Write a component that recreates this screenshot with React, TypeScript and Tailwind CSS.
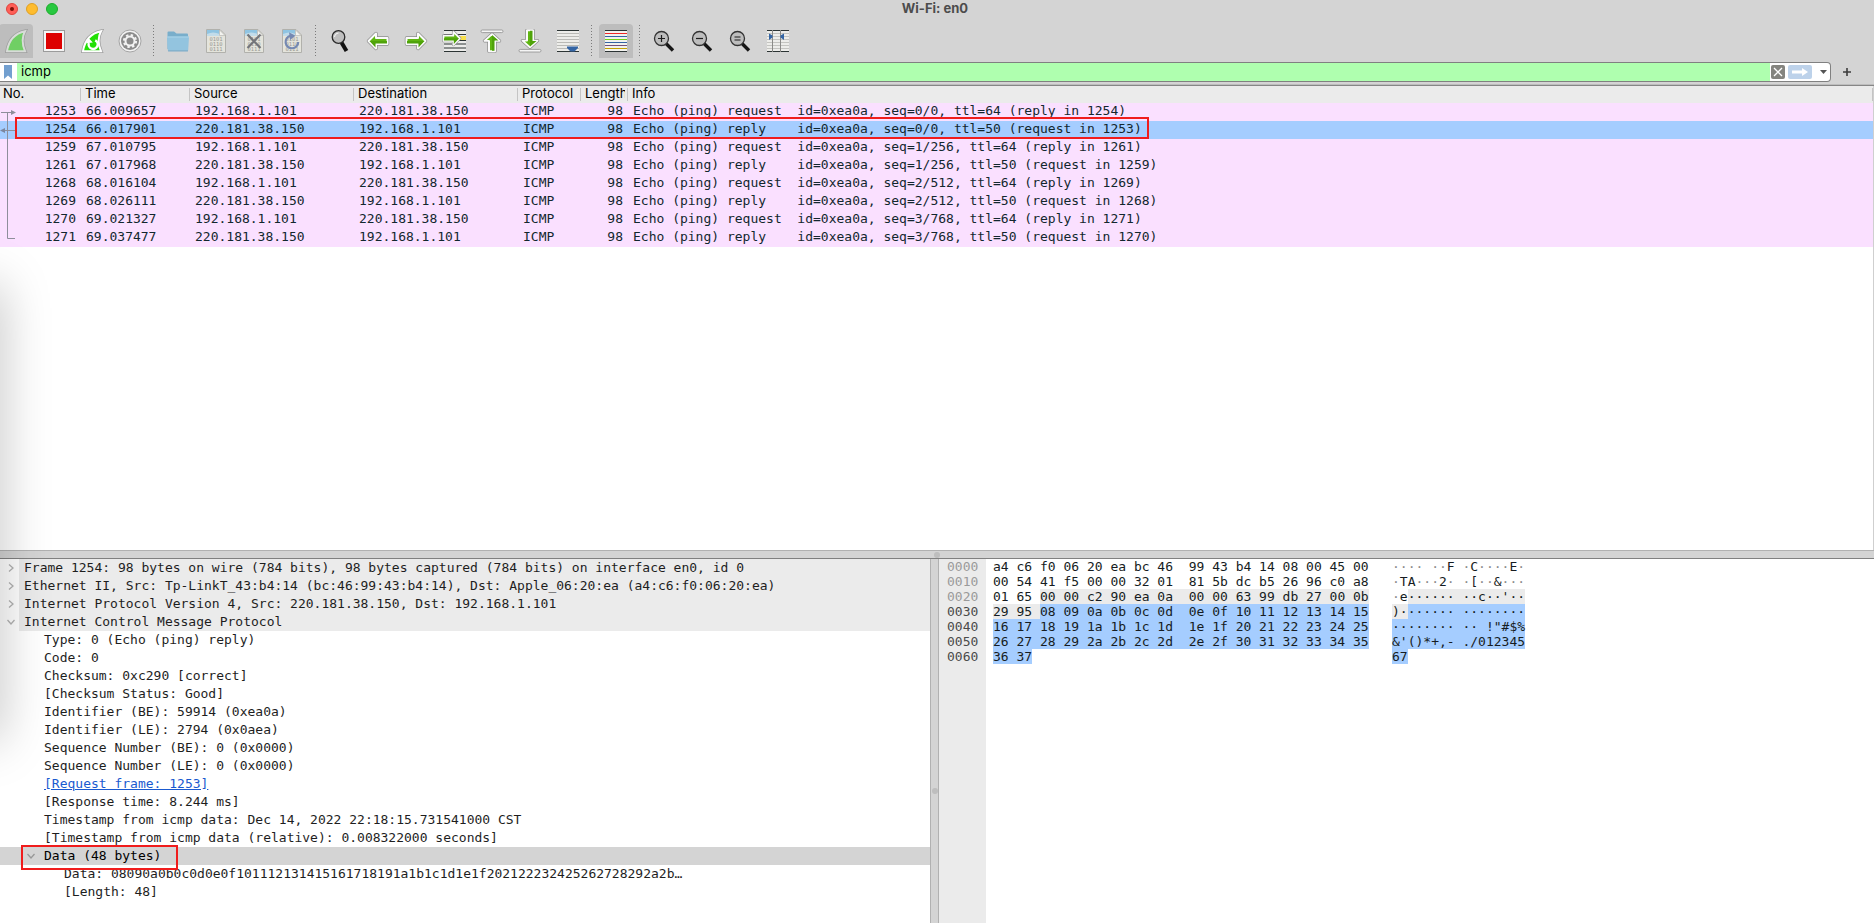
import type { ReactNode } from "react";

type Packet = {
  no: number;
  time: string;
  src: string;
  dst: string;
  info: string;
};

const LOCAL = "192.168.1.101";
const REMOTE = "220.181.38.150";

const packets: Packet[] = [
  { no: 1253, time: "66.009657", src: LOCAL, dst: REMOTE, info: "Echo (ping) request  id=0xea0a, seq=0/0, ttl=64 (reply in 1254)" },
  { no: 1254, time: "66.017901", src: REMOTE, dst: LOCAL, info: "Echo (ping) reply    id=0xea0a, seq=0/0, ttl=50 (request in 1253)" },
  { no: 1259, time: "67.010795", src: LOCAL, dst: REMOTE, info: "Echo (ping) request  id=0xea0a, seq=1/256, ttl=64 (reply in 1261)" },
  { no: 1261, time: "67.017968", src: REMOTE, dst: LOCAL, info: "Echo (ping) reply    id=0xea0a, seq=1/256, ttl=50 (request in 1259)" },
  { no: 1268, time: "68.016104", src: LOCAL, dst: REMOTE, info: "Echo (ping) request  id=0xea0a, seq=2/512, ttl=64 (reply in 1269)" },
  { no: 1269, time: "68.026111", src: REMOTE, dst: LOCAL, info: "Echo (ping) reply    id=0xea0a, seq=2/512, ttl=50 (request in 1268)" },
  { no: 1270, time: "69.021327", src: LOCAL, dst: REMOTE, info: "Echo (ping) request  id=0xea0a, seq=3/768, ttl=64 (reply in 1271)" },
  { no: 1271, time: "69.037477", src: REMOTE, dst: LOCAL, info: "Echo (ping) reply    id=0xea0a, seq=3/768, ttl=50 (request in 1270)" },
];

const layers = [
  { text: "Frame 1254: 98 bytes on wire (784 bits), 98 bytes captured (784 bits) on interface en0, id 0", open: false },
  { text: "Ethernet II, Src: Tp-LinkT_43:b4:14 (bc:46:99:43:b4:14), Dst: Apple_06:20:ea (a4:c6:f0:06:20:ea)", open: false },
  { text: "Internet Protocol Version 4, Src: 220.181.38.150, Dst: 192.168.1.101", open: false },
  { text: "Internet Control Message Protocol", open: true },
];

const icmpFields = [
  "Type: 0 (Echo (ping) reply)",
  "Code: 0",
  "Checksum: 0xc290 [correct]",
  "[Checksum Status: Good]",
  "Identifier (BE): 59914 (0xea0a)",
  "Identifier (LE): 2794 (0x0aea)",
  "Sequence Number (BE): 0 (0x0000)",
  "Sequence Number (LE): 0 (0x0000)",
  "[Request frame: 1253]",
  "[Response time: 8.244 ms]",
  "Timestamp from icmp data: Dec 14, 2022 22:18:15.731541000 CST",
  "[Timestamp from icmp data (relative): 0.008322000 seconds]",
];

type Tone = "plain" | "field" | "selected";
type Segment = [string, Tone];

const toneClass: Record<Tone, string> = {
  plain: "",
  field: "bg-[#ebebeb]",
  selected: "bg-[#a5cdff]",
};

const hexRows: { offset: string; hex: Segment[]; ascii: Segment[] }[] = [
  {
    offset: "0000",
    hex: [["a4 c6 f0 06 20 ea bc 46  99 43 b4 14 08 00 45 00", "plain"]],
    ascii: [["···· ··F ·C····E·", "plain"]],
  },
  {
    offset: "0010",
    hex: [["00 54 41 f5 00 00 32 01  81 5b dc b5 26 96 c0 a8", "plain"]],
    ascii: [["·TA···2· ·[··&···", "plain"]],
  },
  {
    offset: "0020",
    hex: [["01 65 ", "plain"], ["00 00 c2 90 ea 0a  00 00 63 99 db 27 00 0b", "field"]],
    ascii: [["·e", "plain"], ["······ ··c··'··", "field"]],
  },
  {
    offset: "0030",
    hex: [["29 95 ", "field"], ["08 09 0a 0b 0c 0d  0e 0f 10 11 12 13 14 15", "selected"]],
    ascii: [[")·", "field"], ["······ ········", "selected"]],
  },
  {
    offset: "0040",
    hex: [["16 17 18 19 1a 1b 1c 1d  1e 1f 20 21 22 23 24 25", "selected"]],
    ascii: [["········ ·· !\"#$%", "selected"]],
  },
  {
    offset: "0050",
    hex: [["26 27 28 29 2a 2b 2c 2d  2e 2f 30 31 32 33 34 35", "selected"]],
    ascii: [["&'()*+,- ./012345", "selected"]],
  },
  {
    offset: "0060",
    hex: [["36 37", "selected"]],
    ascii: [["67", "selected"]],
  },
];

const MONO = "font-['DejaVu_Sans_Mono',monospace] text-[13px]";

/* ---------- toolbar icons, all on a 24px grid ---------- */

const Icon = ({ children }: { children: ReactNode }) => (
  <svg width="24" height="24" viewBox="0 0 24 24" fill="none" aria-hidden="true">
    {children}
  </svg>
);

const FIN = "M3 22.2C4.5 12.5 10 4.5 21 2.2C17.8 8 18 15 21 22.2Z";

const Fin = ({ color, edge }: { color: string; edge: string }) => (
  <>
    <path d={FIN} stroke="#9d9d9d" strokeWidth="3.4" />
    <path d={FIN} fill={color} stroke={edge} strokeWidth="2" />
  </>
);

const StartIcon = () => (
  <Icon>
    <Fin color="#70cf64" edge="#d8dcd8" />
  </Icon>
);

const StopIcon = () => (
  <Icon>
    <rect x="1.5" y="1.5" width="21" height="21" fill="#f4f4f4" stroke="#9b9b9b" />
    <rect x="4" y="4" width="16" height="16" fill="#dd0000" />
  </Icon>
);

const RestartIcon = () => (
  <Icon>
    <Fin color="#22e005" edge="#ffffff" />
    <path d="M8.9 14A4.5 4.5 0 1 0 15.2 11.4" stroke="#fff" strokeWidth="2.4" />
    <path d="M6.4 14.2L8.2 8.6L12.8 13.4Z" fill="#fff" />
  </Icon>
);

const OptionsIcon = () => (
  <Icon>
    <circle cx="12" cy="12" r="11" fill="#f2f2f2" stroke="#a5a5a5" />
    <circle cx="12" cy="12" r="9" fill="#8b8b8b" />
    <circle cx="12" cy="12" r="6" stroke="#f2f2f2" strokeWidth="2.2" strokeDasharray="2.4 2.31" />
    <circle cx="12" cy="12" r="4.5" stroke="#f2f2f2" strokeWidth="2" />
  </Icon>
);

const FolderIcon = () => (
  <Icon>
    <path d="M1.5 3.5Q1.5 2.5 2.5 2.5H8L10.5 4.5H21Q22 4.5 22 5.5V20H1.5Z" fill="#79aecb" />
    <path d="M1 7.5H23L22.2 21.2Q22.1 22.2 21 22.2H3Q1.9 22.2 1.8 21.2Z" fill="#93c4df" />
    <path d="M1 8H23" stroke="#abd4e9" />
    <path d="M2 21.9H22" stroke="#7da9c2" />
  </Icon>
);

const Sheet = ({ children }: { children?: ReactNode }) => (
  <Icon>
    <path d="M2.5 0.5H16L21.5 6V23.5H2.5Z" fill="#e4e4dc" stroke="#b1b1ac" />
    <path d="M3 1H15.5V6H3Z" fill="#8fc4e2" />
    <path d="M3 5Q9 2 15.5 5V7H3Z" fill="#c2dcea" />
    <path d="M15.5 1V6.5H21Z" fill="#f4f4f0" stroke="#b9b9b4" strokeWidth="0.7" />
    <g fill="#9b9b96" fontFamily="DejaVu Sans Mono, monospace" fontSize="5.5">
      <text x="5.4" y="12">0101</text>
      <text x="5.4" y="17">0110</text>
      <text x="5.4" y="22">0111</text>
    </g>
    {children}
  </Icon>
);

const CloseFileIcon = () => (
  <Sheet>
    <path d="M5.5 5.5L18.5 19M18.5 5.5L5.5 19" stroke="#74757a" strokeWidth="2.2" />
  </Sheet>
);

const ReloadFileIcon = () => (
  <Sheet>
    <path d="M10.5 6.8A6.3 6.3 0 1 0 18.2 13" stroke="#7589b2" strokeWidth="2.2" />
    <path d="M9 3.2L15.5 6.8L10 11Z" fill="#7589b2" />
  </Sheet>
);

const FindIcon = () => (
  <Icon>
    <path d="M13.5 13.5L18.5 22" stroke="#111" strokeWidth="4" />
    <circle cx="10.5" cy="8" r="6.3" fill="#bfbfbf" stroke="#2b2b2b" strokeWidth="1.3" />
    <path d="M6.5 8Q7 4.5 10.5 4" stroke="#f1f1f1" strokeWidth="1.2" />
  </Icon>
);

const GREEN_ARROW = "M2.5 12L10 4.5V9H21.5V15H10V19.5Z";

const GreenArrow = ({ transform }: { transform?: string }) => (
  <g transform={transform} strokeLinejoin="round">
    <path d={GREEN_ARROW} stroke="#8d8d8d" strokeWidth="3.4" />
    <path d={GREEN_ARROW} stroke="#fbfbfb" strokeWidth="2" fill="#5fb512" />
    <path d="M10 12H21V14.5H9.5V18.5L3.5 12Z" fill="#4fa30a" />
  </g>
);

const PrevIcon = () => (
  <Icon>
    <GreenArrow />
  </Icon>
);

const NextIcon = () => (
  <Icon>
    <GreenArrow transform="matrix(-1 0 0 1 24 0)" />
  </Icon>
);

const GotoIcon = () => (
  <Icon>
    <rect x="2" y="1" width="22" height="22" fill="#ececea" />
    <path d="M2 1.5H24M2 11.5H24M2 15H24M2 19H24M2 22.5H24" stroke="#2c3434" />
    <path d="M2 5.5H24" stroke="#2c3434" />
    <rect x="17" y="7" width="7" height="4" fill="#f8e04a" />
    <GreenArrow transform="matrix(-0.86 0 0 0.86 20 -1)" />
  </Icon>
);

const FirstIcon = () => (
  <Icon>
    <rect x="1" y="1" width="22" height="2.6" rx="1.3" fill="#f5f5f5" stroke="#8d8d8d" strokeWidth="0.8" />
    <GreenArrow transform="matrix(0 0.9 1 0 0 2.9)" />
  </Icon>
);

const LastIcon = () => (
  <Icon>
    <rect x="1" y="20.4" width="22" height="2.6" rx="1.3" fill="#f5f5f5" stroke="#8d8d8d" strokeWidth="0.8" />
    <GreenArrow transform="matrix(0 -0.9 1 0 0 20.6)" />
  </Icon>
);

const AutoScrollIcon = () => (
  <Icon>
    <rect x="1" y="1" width="22" height="22" fill="#ededea" />
    <path d="M1 4.5H23M1 7.5H23M1 10.5H23M1 13.5H23M1 16.5H23M1 19.5H23" stroke="#babab6" />
    <path d="M1 1.5H23M1 22.5H23" stroke="#2c3434" />
    <path d="M11 17.5H22V19L18.5 22.5H14.5L11 19Z" fill="#3465a4" />
  </Icon>
);

const ColorizeIcon = () => (
  <Icon>
    <rect x="1" y="1" width="22" height="22" fill="#f2f2ef" />
    <path d="M1 1.5H23M1 22.5H23" stroke="#2c3434" />
    <path d="M1 4.5H23" stroke="#ef2929" />
    <path d="M1 7.5H23" stroke="#3465a4" />
    <path d="M1 10.5H23" stroke="#73d216" />
    <path d="M1 13.5H23" stroke="#3465a4" />
    <path d="M1 16.5H23" stroke="#75507b" />
    <path d="M1 19.5H23" stroke="#c4a000" />
  </Icon>
);

const ZoomIcon = ({ mark }: { mark: string }) => (
  <Icon>
    <path d="M14 14.5L21 21.5" stroke="#161616" strokeWidth="3.4" />
    <circle cx="9.5" cy="9.5" r="7" fill="#bdbdbd" stroke="#333" strokeWidth="1.3" />
    <path d={mark} stroke="#1d1d1d" strokeWidth="1.2" />
  </Icon>
);

const ResizeIcon = () => (
  <Icon>
    <rect x="1" y="1" width="22" height="22" fill="#ededea" />
    <path d="M1 4.5H23M1 7.5H23M1 10.5H23M1 13.5H23M1 16.5H23M1 19.5H23" stroke="#c4c4c0" />
    <path d="M1 1.5H23M1 22.5H23" stroke="#2c3434" />
    <path d="M6.5 1V23M14.5 1V23" stroke="#8b8b88" />
    <path d="M3 4.5L6.5 6.5V8.5L3 11Z" fill="#3465a4" />
    <path d="M18 4.5L14.5 6.5V8.5L18 11Z" fill="#3465a4" />
  </Icon>
);

const ToolButton = ({ label, active, children }: { label: string; active?: boolean; children: ReactNode }) => (
  <button
    type="button"
    aria-label={label}
    className={`flex h-[34px] w-[34px] items-center justify-center ${active ? "rounded-t-sm bg-[#bdbdbd]" : ""}`}
  >
    {children}
  </button>
);

const Divider = () => (
  <svg width="6" height="32" viewBox="0 0 6 32" aria-hidden="true">
    <path d="M2.5 0V32" stroke="#7b7b7b" strokeDasharray="1 2" />
  </svg>
);

const Toolbar = () => (
  <div className="-ml-px flex h-[42px] items-center gap-1">
    <ToolButton label="Start capturing packets" active><StartIcon /></ToolButton>
    <ToolButton label="Stop capturing packets"><StopIcon /></ToolButton>
    <ToolButton label="Restart current capture"><RestartIcon /></ToolButton>
    <ToolButton label="Capture options"><OptionsIcon /></ToolButton>
    <Divider />
    <ToolButton label="Open a capture file"><FolderIcon /></ToolButton>
    <ToolButton label="Save this capture file"><Sheet /></ToolButton>
    <ToolButton label="Close this capture file"><CloseFileIcon /></ToolButton>
    <ToolButton label="Reload this file"><ReloadFileIcon /></ToolButton>
    <Divider />
    <ToolButton label="Find a packet"><FindIcon /></ToolButton>
    <ToolButton label="Previous packet"><PrevIcon /></ToolButton>
    <ToolButton label="Next packet"><NextIcon /></ToolButton>
    <ToolButton label="Go to packet"><GotoIcon /></ToolButton>
    <ToolButton label="First packet"><FirstIcon /></ToolButton>
    <ToolButton label="Last packet"><LastIcon /></ToolButton>
    <ToolButton label="Auto scroll"><AutoScrollIcon /></ToolButton>
    <Divider />
    <ToolButton label="Colorize packet list" active><ColorizeIcon /></ToolButton>
    <Divider />
    <ToolButton label="Zoom in"><ZoomIcon mark="M6 9.5H13M9.5 6V13" /></ToolButton>
    <ToolButton label="Zoom out"><ZoomIcon mark="M6 9.5H13" /></ToolButton>
    <ToolButton label="Normal size"><ZoomIcon mark="M6.5 8H12.5M6.5 11H12.5" /></ToolButton>
    <ToolButton label="Resize columns"><ResizeIcon /></ToolButton>
  </div>
);

const TitleBar = () => (
  <div className="relative flex h-[20px] items-start justify-center pr-1">
    <div className="absolute left-1.5 top-[3px] flex gap-2">
      <button type="button" aria-label="Close" className="flex h-3 w-3 items-center justify-center rounded-full border border-[#e0443e] bg-[#ff5f57]">
        <span className="h-1 w-1 rounded-full bg-[#7d1008]"></span>
      </button>
      <button type="button" aria-label="Minimize" className="h-3 w-3 rounded-full border border-[#dfa023] bg-[#febc2e]"></button>
      <button type="button" aria-label="Zoom" className="h-3 w-3 rounded-full border border-[#1dad2b] bg-[#28c840]"></button>
    </div>
    <h1 className="text-[13px] leading-[17px] font-bold text-[#4c4c4c]">Wi-Fi: en0</h1>
  </div>
);

const FilterBar = () => (
  <div className="flex h-[20px] items-center">
    <div className="flex h-[20px] flex-1 items-stretch overflow-hidden rounded-r border border-l-0 border-[#808080] bg-white">
      <button type="button" aria-label="Filter bookmarks" className="flex w-[17px] items-center pl-1">
        <svg width="8" height="14" viewBox="0 0 8 14" aria-hidden="true">
          <path d="M0 0H8V14L4 10.5L0 14Z" fill="#729fcf" />
        </svg>
      </button>
      <input
        type="text"
        aria-label="Display filter"
        defaultValue="icmp"
        className="min-w-0 flex-1 bg-[#afffaf] pl-1 text-[13px] text-black outline-none"
      />
      <div className="flex items-center pl-px">
        <button type="button" aria-label="Clear filter" className="flex h-3.5 w-3.5 items-center justify-center rounded-xs bg-[#84847f]">
          <svg width="10" height="10" viewBox="0 0 10 10" aria-hidden="true">
            <path d="M1 1L9 9M9 1L1 9" stroke="#fff" strokeWidth="1.3" />
          </svg>
        </button>
        <button type="button" aria-label="Apply filter" className="ml-[3px] flex h-3.5 w-6 items-center justify-center rounded-xs bg-[#bdd2ea]">
          <svg width="16" height="10" viewBox="0 0 16 10" aria-hidden="true">
            <path d="M0 3.5H10V1L16 5L10 9V6.5H0Z" fill="#fff" />
          </svg>
        </button>
        <button type="button" aria-label="Recent filters" className="flex h-3.5 w-[18px] items-center justify-center pl-1">
          <svg width="7" height="4" viewBox="0 0 7 4" aria-hidden="true">
            <path d="M0 0H7L3.5 4Z" fill="#555" />
          </svg>
        </button>
      </div>
    </div>
    <button type="button" aria-label="Add filter button" className="flex w-[43px] items-center pl-3">
      <svg width="8" height="8" viewBox="0 0 8 8" aria-hidden="true">
        <path d="M4 0V8M0 4H8" stroke="#3d3d3d" strokeWidth="1.6" />
      </svg>
    </button>
  </div>
);

const HeaderCell = ({ children, className = "pl-1" }: { children: ReactNode; className?: string }) => (
  <th scope="col" className="p-0 text-left font-normal">
    <div className={`flex h-[13px] items-end border-r border-[#c4c4c4] leading-[15px] whitespace-nowrap ${className}`}>
      {children}
    </div>
  </th>
);

/* Bracket joining the packets of one conversation */
const Conversation = () => (
  <svg className="absolute left-0 top-[17px]" width="17" height="144" viewBox="0 0 17 144" fill="none" aria-hidden="true">
    <path d="M1 9.5H11M7.5 9V135.5H15M5 27.5H15" stroke="#8e8e9b" />
    <path d="M11 7L16 9.5L11 12Z" fill="#8e8e9b" />
    <path d="M5 25L0 27.5L5 30Z" fill="#7b87a0" />
  </svg>
);

const PacketList = () => (
  <div className="relative flex-1 border-r border-[#cfcfcf] bg-white">
    <table className="w-full table-fixed border-collapse">
      <colgroup>
        <col className="w-[81px]" />
        <col className="w-[109px]" />
        <col className="w-[164px]" />
        <col className="w-[164px]" />
        <col className="w-[63px]" />
        <col className="w-[47px]" />
        <col />
      </colgroup>
      <thead className="bg-[#ebebeb] text-[13px] text-black">
        <tr className="h-[17px]">
          <HeaderCell className="pl-[3px]">No.</HeaderCell>
          <HeaderCell>Time</HeaderCell>
          <HeaderCell>Source</HeaderCell>
          <HeaderCell>Destination</HeaderCell>
          <HeaderCell>Protocol</HeaderCell>
          <HeaderCell className="pr-0.5 pl-1">
            <span className="overflow-hidden">Length</span>
          </HeaderCell>
          <HeaderCell>Info</HeaderCell>
        </tr>
      </thead>
      <tbody className={`${MONO} leading-4 whitespace-pre text-[#12272e]`}>
        {packets.map((p) => (
          <tr key={p.no} className={`h-[18px] align-top ${p.no === 1254 ? "bg-[#a5cdff]" : "bg-[#fae0ff]"}`}>
            <td className="py-0 pr-[5px] text-right">{p.no}</td>
            <td className="py-0 pl-[5px]">{p.time}</td>
            <td className="py-0 pl-[5px]">{p.src}</td>
            <td className="py-0 pl-[5px]">{p.dst}</td>
            <td className="py-0 pl-[5px]">ICMP</td>
            <td className="py-0 pr-[5px] text-right">98</td>
            <td className="py-0 pl-[5px]">{p.info}</td>
          </tr>
        ))}
      </tbody>
    </table>
    <Conversation />
    <div className="pointer-events-none absolute left-[15px] top-[31px] h-[22px] w-[1134px] border-2 border-[#f01c1c]"></div>
  </div>
);

const Chevron = ({ open, color }: { open: boolean; color: string }) => (
  <svg width="8" height="8" viewBox="0 0 8 8" fill="none" aria-hidden="true">
    <path d={open ? "M0.5 2L4 6L7.5 2" : "M2 0.5L6 4L2 7.5"} stroke={color} strokeWidth="1.3" />
  </svg>
);

const Details = () => (
  <ul className={`${MONO} overflow-hidden bg-white pb-[22px] leading-[18px] whitespace-pre text-[#1e1e1e]`}>
    {layers.map((layer) => (
      <li key={layer.text} className="flex">
        <button type="button" aria-label="Toggle" aria-expanded={layer.open} className="flex w-[19px] items-center pl-[7px]">
          <Chevron open={layer.open} color="#b3b3b3" />
        </button>
        <span className="flex-1 bg-[#ebebeb] pl-[5px]">{layer.text}</span>
      </li>
    ))}
    {icmpFields.map((field) => (
      <li key={field} className="pl-11">
        {field.startsWith("[Request") ? (
          <a href="#frame-1253" className="text-[#1a5ad0] underline">{field}</a>
        ) : (
          field
        )}
      </li>
    ))}
    <li className="relative flex bg-[#d4d4d4] text-black">
      <button type="button" aria-label="Toggle" aria-expanded={true} className="flex w-[39px] items-center pl-[27px]">
        <Chevron open color="#989898" />
      </button>
      <span className="pl-[5px]">Data (48 bytes)</span>
      <div className="pointer-events-none absolute left-[21px] -top-0.5 h-[25px] w-[157px] border-2 border-[#f01c1c]"></div>
    </li>
    <li className="pl-16">Data: 08090a0b0c0d0e0f101112131415161718191a1b1c1d1e1f202122232425262728292a2b…</li>
    <li className="pl-16">[Length: 48]</li>
  </ul>
);

const Segments = ({ parts, dim }: { parts: Segment[]; dim?: boolean }) => (
  <>
    {parts.map(([text, tone]) => (
      <span key={text} className={`inline-block h-[15px] align-top ${toneClass[tone]}`}>
        {dim && tone === "plain"
          ? text.split(/(·+)/).map((bit, i) => (
              <span key={i} className={bit.startsWith("·") ? "text-[#8c8c8c]" : ""}>{bit}</span>
            ))
          : text}
      </span>
    ))}
  </>
);

const HexDump = () => (
  <div className={`${MONO} grid grid-cols-[47px_1fr] overflow-hidden bg-white leading-[15px] whitespace-pre text-[#161c22]`}>
    <div className="bg-[#ebebeb] pl-2">
      {hexRows.map((row, i) => (
        <div key={row.offset} className={i < 3 ? "text-[#9a9a9a]" : "text-[#4a4a4a]"}>{row.offset}</div>
      ))}
    </div>
    <div className="pl-[7px]">
      {hexRows.map((row) => (
        <div key={row.offset} className="flex h-[15px]">
          <div className="w-[399px]"><Segments parts={row.hex} /></div>
          <div><Segments parts={row.ascii} dim /></div>
        </div>
      ))}
    </div>
  </div>
);

const App = () => {
  return (
    <main className="relative flex min-h-screen flex-col overflow-hidden bg-[#d4d4d4] font-['Inter',sans-serif]">
      <TitleBar />
      <Toolbar />
      <FilterBar />
      <div className="mt-0.5 h-0.5 border-b border-[#868686] bg-[#bdbdbd]"></div>
      <PacketList />
      <div className="flex h-[9px] items-center justify-center border-t border-b border-t-[#b1b1b1] border-b-[#808080] bg-[#d4d4d4]">
        <span className="h-1.5 w-1.5 rounded-full bg-[#bebebe]"></span>
      </div>
      <div className="grid grid-cols-[930fr_9px_935fr]">
        <Details />
        <div className="flex items-center justify-center border-r border-l border-[#b1b1b1] bg-[#d4d4d4] pt-[100px]">
          <span className="h-1.5 w-1.5 rounded-full bg-[#bebebe]"></span>
        </div>
        <HexDump />
      </div>
      {/* shadow cast by a window just off the left edge */}
      <div className="pointer-events-none absolute -left-10 top-[285px] bottom-[183px] w-10 shadow-[0_0_50px_rgba(0,0,0,0.26)]"></div>
    </main>
  );
};

export default App;
